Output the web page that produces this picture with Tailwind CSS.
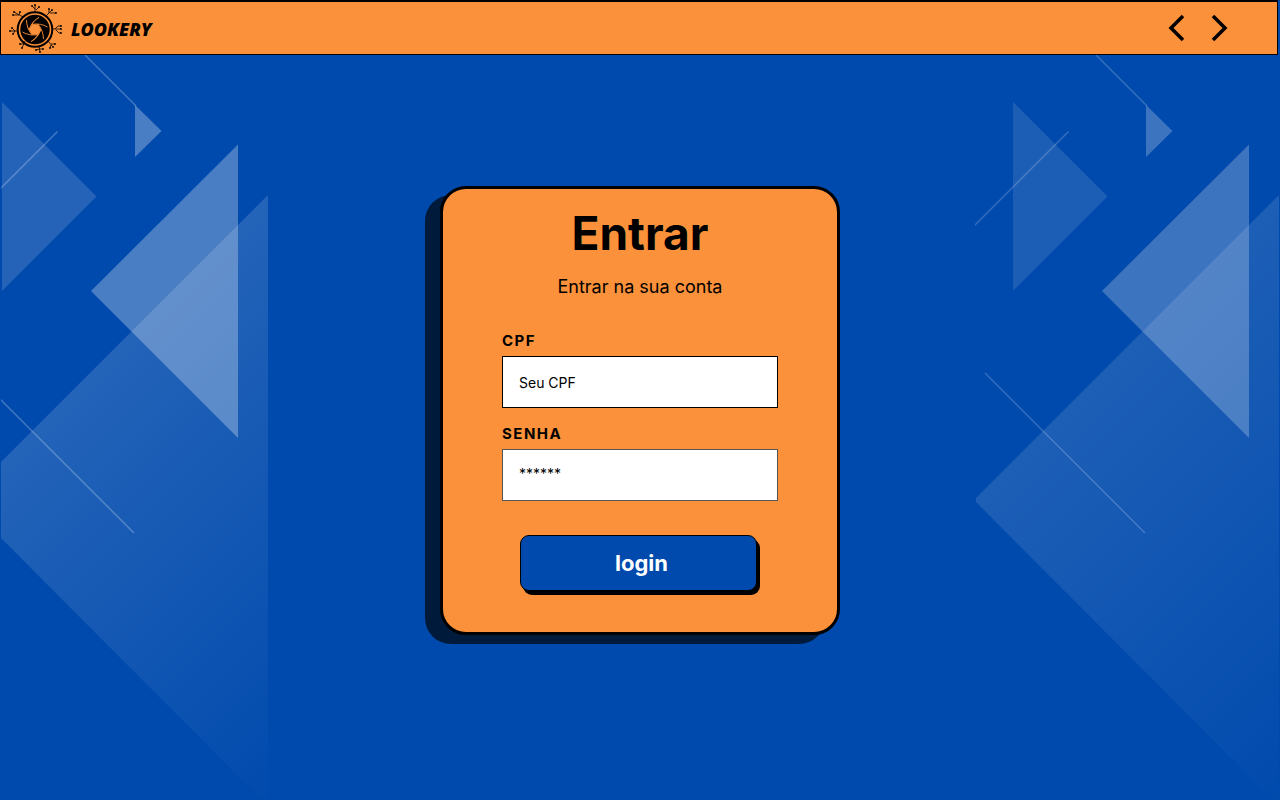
<!DOCTYPE html>
<html lang="pt-BR">
<head>
<meta charset="utf-8">
<meta name="viewport" content="width=device-width, initial-scale=1">
<title>Lookery - Entrar</title>
<script src="https://cdn.jsdelivr.net/npm/@tailwindcss/browser@4"></script>
</head>
<body class="relative flex min-h-screen flex-col overflow-x-hidden bg-[#004aad] font-['Inter',sans-serif] text-black">

<!-- Decorative triangles along both sides -->
<svg class="pointer-events-none absolute top-[55px] left-px" width="268" height="745" viewBox="37 55 268 745" fill="#fff" aria-hidden="true">
  <defs>
    <linearGradient id="fade" gradientUnits="userSpaceOnUse" x1="152" y1="348" x2="467" y2="663">
      <stop offset="0" stop-color="#fff"/>
      <stop offset="1" stop-color="#fff" stop-opacity="0"/>
    </linearGradient>
    <path id="diamond" d="M304 195L1 498v4L304 806z" fill="url(#fade)"/>
    <path id="side" d="M38 102l94.500 94.500-94.500 94.500z"/>
    <path id="small" d="M171 105l26.500 26-26.500 26z"/>
    <path id="large" d="M274 144.500V438L127 291z"/>
    <path id="lines" d="M0 225l93.500-93.500M121 55l51 51M10 373l160 160" stroke="#fff" stroke-width="1.500"/>
  </defs>
  <use href="#diamond" opacity=".14"/>
  <use href="#side" opacity=".14"/>
  <use href="#small" opacity=".29"/>
  <use href="#large" opacity=".29"/>
  <use href="#lines" opacity=".25"/>
</svg>
<svg class="pointer-events-none absolute top-[55px] right-px" width="304" height="745" viewBox="0 55 304 745" fill="#fff" aria-hidden="true">
  <use href="#diamond" opacity=".115"/>
  <use href="#side" opacity=".11"/>
  <use href="#small" opacity=".235"/>
  <use href="#large" opacity=".235"/>
  <use href="#lines" opacity=".2"/>
</svg>

<header class="relative mr-[2px] flex h-[55px] items-center justify-between border-x border-t-2 border-b border-black bg-[#fb913a] pr-[45px] pl-[8px]">
  <a href="#" class="flex items-center gap-[8px]">
    <svg width="54" height="52" viewBox="0 0 54 52" fill="none" stroke="#000" aria-hidden="true">
      <defs><path id="blade" d="M23 22.300Q32 21 38.500 25"/></defs>
      <circle cx="26" cy="27.500" r="17.300" stroke-width="2"/>
      <circle cx="26" cy="27.500" r="14.700" fill="#000" stroke="none"/>
      <path d="M23 22.300h6l3 5.200-3 5.200h-6l-3-5.200z" fill="#fb913a" stroke="none"/>
      <g stroke="#fb913a" stroke-width=".9">
        <use href="#blade"/>
        <use href="#blade" transform="rotate(60 26 27.500)"/>
        <use href="#blade" transform="rotate(120 26 27.500)"/>
        <use href="#blade" transform="rotate(180 26 27.500)"/>
        <use href="#blade" transform="rotate(240 26 27.500)"/>
        <use href="#blade" transform="rotate(300 26 27.500)"/>
      </g>
      <g stroke-width=".8">
        <path d="M26 10V3M26 7l-3-3M27 8l3-3"/>
        <path d="M37 14l6-6M40 11V7M41 11h6"/>
        <path d="M44 27h8M46 27l3-3h3M47 28l3 3h2"/>
        <path d="M39 39l5 6M42 42h4M42 43l-1 3"/>
        <path d="M30 44l1 6M31 47l-4 1M31 47h3"/>
        <path d="M16 39l-3 7M15 42h-4"/>
        <path d="M9 29H1M6 29l-3-3M6 29l-2 3"/>
        <path d="M14 15L5 10M10 13H4M10 13l1-3"/>
      </g>
      <g fill="#000" stroke="none">
        <circle cx="26" cy="3" r=".9"/><circle cx="23" cy="4" r=".9"/><circle cx="30" cy="5" r=".9"/><circle cx="40" cy="7" r=".9"/><circle cx="43" cy="8" r=".9"/><circle cx="47" cy="11" r=".9"/><circle cx="52" cy="24" r=".9"/><circle cx="52" cy="27" r=".9"/><circle cx="52" cy="31" r=".9"/><circle cx="46" cy="42" r=".9"/><circle cx="44" cy="45" r=".9"/><circle cx="41" cy="46" r=".9"/><circle cx="31" cy="50" r=".9"/><circle cx="34" cy="47" r=".9"/><circle cx="27" cy="48" r=".9"/><circle cx="13" cy="46" r=".9"/><circle cx="11" cy="42" r=".9"/><circle cx="1" cy="29" r=".9"/><circle cx="3" cy="26" r=".9"/><circle cx="4" cy="32" r=".9"/><circle cx="5" cy="10" r=".9"/><circle cx="4" cy="13" r=".9"/><circle cx="11" cy="10" r=".9"/>
      </g>
    </svg>
    <span class="pt-[2px] font-['Open_Sans',sans-serif] text-[18px] leading-[24px] font-extrabold italic">LOOKERY</span>
  </a>
  <nav class="flex gap-[20px] pb-[1px]" aria-label="Navegação">
    <button type="button" aria-label="Voltar" class="flex h-[30px] w-[24px] items-center justify-center">
      <svg width="20" height="28" viewBox="0 0 20 28" fill="none" stroke="#000" stroke-width="3.500"><path d="M17 2L5 14l12 12"/></svg>
    </button>
    <button type="button" aria-label="Avançar" class="flex h-[30px] w-[24px] items-center justify-center">
      <svg width="20" height="28" viewBox="0 0 20 28" fill="none" stroke="#000" stroke-width="3.500"><path d="M3 2l12 12L3 26"/></svg>
    </button>
  </nav>
</header>

<main class="relative flex flex-1 items-start justify-center px-4 pt-[131px] pb-8">
  <section class="w-full max-w-[400px] rounded-[26px] border-3 border-black bg-[#fb913a] px-[59px] pt-[14px] pb-[41px] shadow-[-15px_9px_0_#001a3b]">
    <h1 class="text-center text-[46px] leading-[60px] font-bold">Entrar</h1>
    <p class="mt-[12px] text-center text-[18px] leading-[24px]">Entrar na sua conta</p>
    <form class="mt-[32px] flex flex-col">
      <label for="cpf" class="text-[15px] leading-[20px] font-bold tracking-widest">CPF</label>
      <input id="cpf" type="text" placeholder="Seu CPF" class="mt-[5px] h-[52px] w-full border border-black bg-white px-[16px] text-[14px] placeholder:text-black">
      <label for="senha" class="mt-[16px] text-[15px] leading-[20px] font-bold tracking-widest">SENHA</label>
      <input id="senha" type="password" placeholder="******" class="mt-[5px] h-[52px] w-full border border-[#555] bg-white px-[16px] pb-[4px] text-[14px] placeholder:text-black">
      <button type="submit" class="mt-[34px] mr-[21px] ml-[18px] h-[56px] rounded-[9px] border border-black bg-[#004aad] pl-[6px] text-[22px] leading-[28px] font-bold text-white shadow-[3px_4px_0_#000]">login</button>
    </form>
  </section>
</main>
</body>
</html>
